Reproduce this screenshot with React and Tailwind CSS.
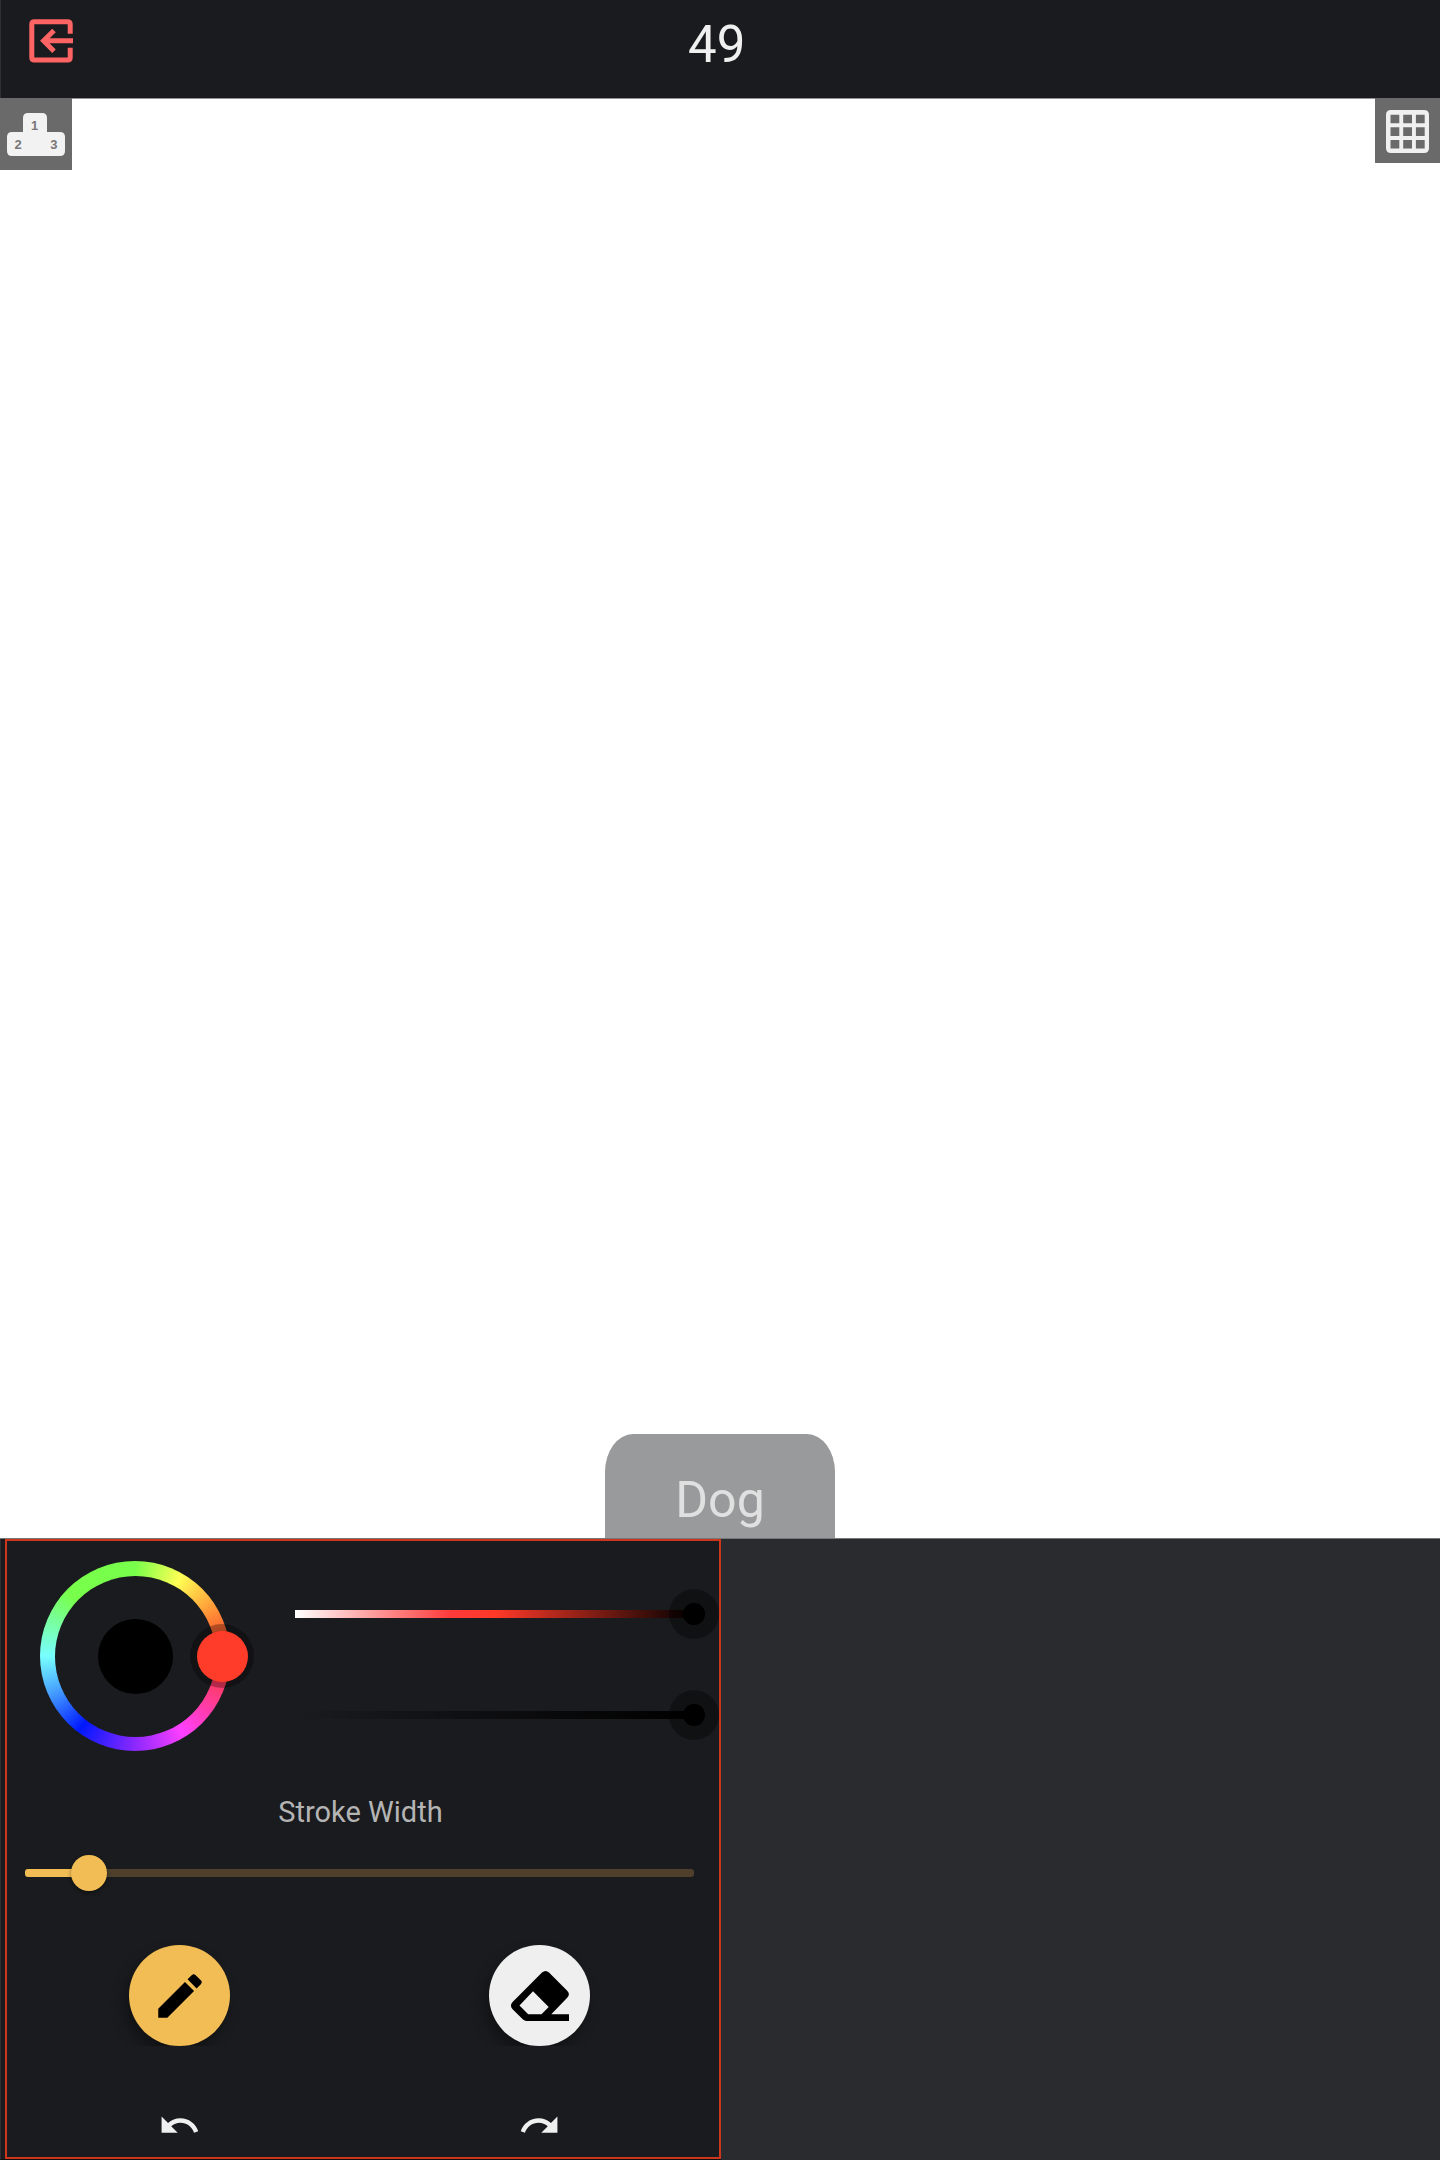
import React from "react";

function ExitIcon() {
  return (
    <svg className="block h-[44px] w-[44px]" viewBox="0 0 44 44" fill="none" stroke="#ff6464" strokeWidth="5">
      <path d="M41.2 14.8V5.2Q41.2 2.7 38.7 2.7H5.3Q2.8 2.7 2.8 5.2V38.4Q2.8 40.9 5.3 40.9H38.7Q41.2 40.9 41.2 38.4V28.8" />
      <path d="M44 21.8H15M25 11.4L14.6 21.8L25 32.2" />
    </svg>
  );
}

function PodiumIcon() {
  return (
    <svg className="block h-[72px] w-[72px]" viewBox="0 0 72 72">
      <path
        fill="#f2f2f2"
        d="M28 15H42Q47 15 47 20V34H60Q65 34 65 39V53Q65 58 60 58H12Q7 58 7 53V39Q7 34 12 34H23V20Q23 15 28 15Z"
      />
      <g className="font-['Liberation_Sans',sans-serif]" fontSize="13" fontWeight="700" fill="#777777" textAnchor="middle">
        <text x="34.5" y="31.5">1</text>
        <text x="18.2" y="51">2</text>
        <text x="53.8" y="51">3</text>
      </g>
    </svg>
  );
}

function GridIcon() {
  return (
    <svg className="block h-[43px] w-[43px]" viewBox="0 0 43 43">
      <path
        fill="#f0f0f0"
        fillRule="evenodd"
        d="M5 0H38Q43 0 43 5V38Q43 43 38 43H5Q0 43 0 38V5Q0 0 5 0ZM4.5 4.7V13.3H13.3V4.7ZM17.2 4.7V13.3H26V4.7ZM29.9 4.7V13.3H38.7V4.7ZM4.5 17.2V26H13.3V17.2ZM17.2 17.2V26H26V17.2ZM29.9 17.2V26H38.7V17.2ZM4.5 30V38.5H13.3V30ZM17.2 30V38.5H26V30ZM29.9 30V38.5H38.7V30Z"
      />
    </svg>
  );
}

function PencilIcon() {
  return (
    <svg className="block h-[58px] w-[58px]" viewBox="0 0 24 24">
      <path d="M20.71 7.04c.39-.39.39-1.04 0-1.41l-2.34-2.34c-.37-.39-1.02-.39-1.41 0l-1.84 1.83 3.75 3.75M3 17.25V21h3.75L17.81 9.93l-3.75-3.75L3 17.25z" />
    </svg>
  );
}

function EraserIcon() {
  return (
    <svg className="block h-[50px] w-[58px]" viewBox="0 0 58 50">
      <path
        fillRule="evenodd"
        d="M31 1.6Q34.5 -1.6 38 1.6L56.2 19.8Q59.6 23.3 56.2 26.8L40.3 43.2H58V50H15.5Q13.5 50 12 48.6L1.6 38.2Q-1.7 34.6 1.6 31ZM22 20.3L8.5 34.5L17.2 43.2H30.5L37.7 36Z"
      />
    </svg>
  );
}

function UndoIcon({ flip }) {
  return (
    <svg className={flip ? "block h-[43px] w-[43px] -scale-x-100" : "block h-[43px] w-[43px]"} viewBox="0 0 24 24">
      <path
        fill="#f0f0f0"
        d="M12.5 8c-2.65 0-5.05.99-6.9 2.6L2 7v9h9l-3.62-3.62c1.39-1.16 3.16-1.88 5.12-1.88 3.54 0 6.55 2.31 7.6 5.5l2.37-.78C21.08 11.03 17.15 8 12.5 8z"
      />
    </svg>
  );
}

function HueWheel() {
  return (
    <div className="relative ml-[33px] flex h-[190px] w-[190px] items-center justify-center rounded-full bg-[conic-gradient(#78ff4b_0deg,#ffff55_30deg,#ff9a38_58deg,#ff3b29_84deg,#ff3b3b_97deg,#ff3cb0_128deg,#ff40ff_148deg,#8c28ff_180deg,#0018ff_217deg,#4aa8ff_248deg,#78ffff_270deg,#78ff4b_313deg,#78ff4b_360deg)]">
      <div className="flex h-[161px] w-[161px] items-center justify-center rounded-full bg-[#1a1b1e]">
        <div className="h-[75px] w-[75px] rounded-full bg-black" />
      </div>
      <div className="absolute top-[63px] left-[150px] flex h-[64px] w-[64px] items-center justify-center rounded-full bg-black/30">
        <div className="h-[51px] w-[51px] rounded-full bg-[#ff3b29]" />
      </div>
    </div>
  );
}

function ToneSlider({ track }) {
  return (
    <div className="relative flex h-[50px] items-center">
      <div className={`h-[8px] w-[400px] ${track}`} />
      <div className="absolute top-0 left-[374px] flex h-[50px] w-[50px] items-center justify-center rounded-full bg-black/35">
        <div className="h-[22px] w-[22px] rounded-full bg-black" />
      </div>
    </div>
  );
}

function ToolButton({ color, children }) {
  return (
    <div className="flex h-[121px] w-[141px] items-center justify-center overflow-hidden pt-[20px]">
      <button className={`flex h-[101px] w-[101px] items-center justify-center rounded-full shadow-[-4px_8px_14px_rgba(0,0,0,0.35)] ${color}`}>
        {children}
      </button>
    </div>
  );
}

export default function App() {
  return (
    <div className="flex h-[2160px] w-[1440px] flex-col overflow-hidden bg-white font-[Roboto,sans-serif]">
      <header className="grid h-[99px] grid-cols-[689px_1fr] border-b border-l border-b-[#929294] border-l-[#2f3033] bg-[#1a1b1e]">
        <div className="pt-[19px] pl-[27.5px]">
          <ExitIcon />
        </div>
        <div className="-ml-[2px] pt-[15px] text-[51px] leading-[60px] text-[#f0f0f0]">49</div>
      </header>

      <main className="flex h-[1439px] flex-col justify-between">
        <div className="-mt-px flex items-start justify-between">
          <button className="bg-[#6a6a6b]">
            <PodiumIcon />
          </button>
          <button className="flex h-[65px] w-[65px] items-start bg-[#6a6a6b] pt-[11.5px] pl-[11px]">
            <GridIcon />
          </button>
        </div>
        <div className="mx-auto h-[104px] w-[230px] rounded-t-[28px_38px] bg-[#999a9b] pt-[36px] text-center text-[50px] leading-[60px] text-[#e0e0e0]">
          Dog
        </div>
      </main>

      <footer className="flex h-[622px] border-t border-t-[#77777a] bg-[#2a2b2e]">
        <div className="w-[721px] border-b border-l border-b-[#101010] border-l-[#2f3033] bg-[#1a1b1e] pl-[4px]">
          <section className="flex h-[620px] flex-col border-2 border-[#cb361c]">
            <div className="flex pt-[20px]">
              <HueWheel />
              <div className="ml-[65px] flex flex-col gap-[51px] pt-[28px]">
                <ToneSlider track="bg-[linear-gradient(90deg,#ffffff_0%,#ff3a3a_39%,#ff3928_50%,#000000_100%)]" />
                <ToneSlider track="bg-[linear-gradient(90deg,rgba(0,0,0,0)_0%,#000000_100%)]" />
              </div>
            </div>
            <div className="mt-[43px] pr-[5px] text-center text-[29px] leading-[36px] text-[#b4b4b5]">Stroke Width</div>
            <div className="relative mt-[25px] ml-[18px] flex h-[36px] w-[669px] items-center">
              <div className="h-[8px] w-[64px] rounded-l-[3px] bg-[#f2bd54]" />
              <div className="h-[8px] flex-1 rounded-r-[3px] bg-[#4e402a]" />
              <div className="absolute top-0 left-[46px] h-[36px] w-[36px] rounded-full bg-[#f2bd54] shadow-[0_2px_4px_rgba(0,0,0,0.4)]" />
            </div>
            <div className="mt-[34px] ml-[102px] flex gap-[219px]">
              <ToolButton color="bg-[#f2bd54]">
                <PencilIcon />
              </ToolButton>
              <ToolButton color="bg-[#efefef]">
                <EraserIcon />
              </ToolButton>
            </div>
            <div className="mt-[58px] ml-[151px] flex gap-[317px]">
              <UndoIcon />
              <UndoIcon flip />
            </div>
          </section>
        </div>
      </footer>
    </div>
  );
}
